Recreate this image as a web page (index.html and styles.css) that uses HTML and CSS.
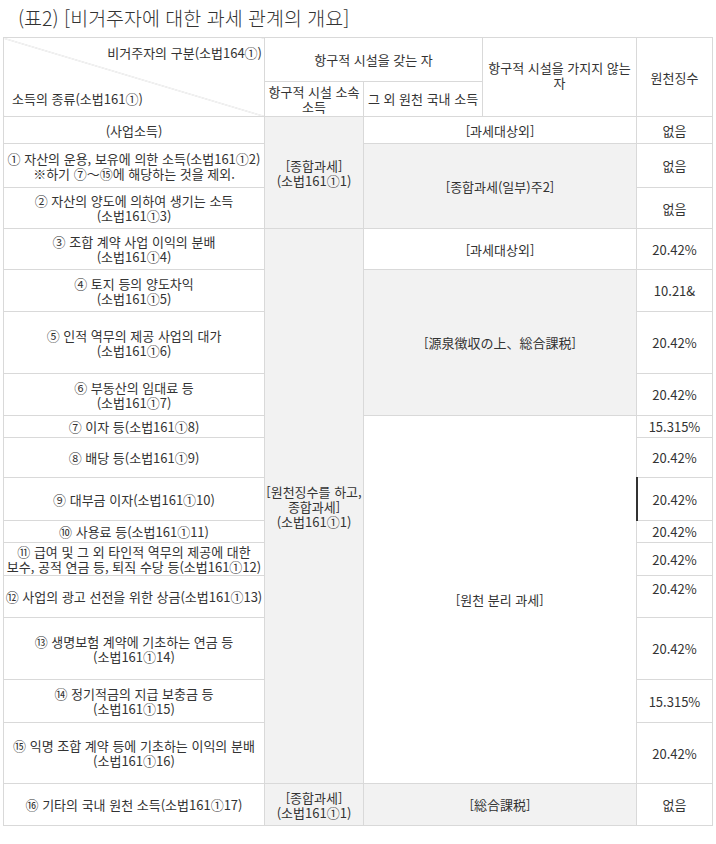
FILE: index.html
```html
<!DOCTYPE html>
<html lang="ko">
<head>
<meta charset="utf-8">
<link rel="stylesheet" href="styles.css">
</head>
<body>
<h1 class="title">(표2) [비거주자에 대한 과세 관계의 개요]</h1>
<table class="tax">
<colgroup>
<col class="c1"><col class="c2"><col class="c3"><col class="c4"><col class="c5">
</colgroup>
<tr class="h1">
<th rowspan="2" class="diag"><div class="diag-in"><span class="dtop">비거주자의 구분(소법164①)</span><span class="dbot">소득의 종류(소법161①)</span></div></th>
<th colspan="2">항구적 시설을 갖는 자</th>
<th rowspan="2" class="top">항구적 시설을 가지지 않는<br>자</th>
<th rowspan="2">원천징수</th>
</tr>
<tr class="h2">
<th>항구적 시설 소속<br>소득</th>
<th>그 외 원천 국내 소득</th>
</tr>
<tr class="r0">
<td>(사업소득)</td>
<td rowspan="3" class="g">[종합과세]<br>(소법161①1)</td>
<td colspan="2">[과세대상외]</td>
<td>없음</td>
</tr>
<tr class="r1">
<td>① 자산의 운용, 보유에 의한 소득(소법161①2)<br>※하기 ⑦～⑮에 해당하는 것을 제외.</td>
<td colspan="2" rowspan="2" class="g">[종합과세(일부)주2]</td>
<td>없음</td>
</tr>
<tr class="r2">
<td>② 자산의 양도에 의하여 생기는 소득<br>(소법161①3)</td>
<td>없음</td>
</tr>
<tr class="r3">
<td>③ 조합 계약 사업 이익의 분배<br>(소법161①4)</td>
<td rowspan="13" class="g">[원천징수를 하고,<br>종합과세]<br>(소법161①1)</td>
<td colspan="2">[과세대상외]</td>
<td>20.42%</td>
</tr>
<tr class="r4">
<td>④ 토지 등의 양도차익<br>(소법161①5)</td>
<td colspan="2" rowspan="3" class="g">[源泉徴収の上、総合課税]</td>
<td>10.21&amp;</td>
</tr>
<tr class="r5">
<td>⑤ 인적 역무의 제공 사업의 대가<br>(소법161①6)</td>
<td>20.42%</td>
</tr>
<tr class="r6">
<td>⑥ 부동산의 임대료 등<br>(소법161①7)</td>
<td>20.42%</td>
</tr>
<tr class="r7">
<td>⑦ 이자 등(소법161①8)</td>
<td colspan="2" rowspan="9">[원천 분리 과세]</td>
<td>15.315%</td>
</tr>
<tr class="r8">
<td>⑧ 배당 등(소법161①9)</td>
<td>20.42%</td>
</tr>
<tr class="r9">
<td>⑨ 대부금 이자(소법161①10)</td>
<td class="dark">20.42%</td>
</tr>
<tr class="r10">
<td>⑩ 사용료 등(소법161①11)</td>
<td>20.42%</td>
</tr>
<tr class="r11">
<td>⑪ 급여 및 그 외 타인적 역무의 제공에 대한<br>보수, 공적 연금 등, 퇴직 수당 등(소법161①12)</td>
<td>20.42%</td>
</tr>
<tr class="r12">
<td>⑫ 사업의 광고 선전을 위한 상금(소법161①13)</td>
<td class="top">20.42%</td>
</tr>
<tr class="r13">
<td>⑬ 생명보험 계약에 기초하는 연금 등<br>(소법161①14)</td>
<td>20.42%</td>
</tr>
<tr class="r14">
<td>⑭ 정기적금의 지급 보충금 등<br>(소법161①15)</td>
<td>15.315%</td>
</tr>
<tr class="r15">
<td>⑮ 익명 조합 계약 등에 기초하는 이익의 분배<br>(소법161①16)</td>
<td>20.42%</td>
</tr>
<tr class="r16">
<td>⑯ 기타의 국내 원천 소득(소법161①17)</td>
<td class="g">[종합과세]<br>(소법161①1)</td>
<td colspan="2" class="g">[総合課税]</td>
<td>없음</td>
</tr>
</table>
</body>
</html>
```

FILE: styles.css
```css
html, body {
  margin: 0;
  padding: 0;
  background: #fff;
}
body {
  font-family: "Noto Sans CJK KR", "Noto Sans", sans-serif;
  color: #333;
  padding: 0 5px 0 3px;
}
.title {
  font-size: 19.5px;
  font-weight: 300;
  line-height: 22px;
  margin: 7px 0 8px 15px;
  color: #333;
}
.tax {
  border-collapse: collapse;
  table-layout: fixed;
  width: 709px;
  font-size: 13px;
  line-height: 15px;
}
.c1 { width: 261px; }
.c2 { width: 99px; }
.c3 { width: 119px; }
.c4 { width: 154px; }
.c5 { width: 76px; }
.tax th, .tax td {
  border: 1px solid #d9d9d9;
  font-weight: 400;
  text-align: center;
  vertical-align: middle;
  padding: 0;
  white-space: nowrap;
}
.tax .g { background: #f2f2f2; }
.tax .top { vertical-align: top; padding-top: 5px; }
.tax th.top { padding-top: 22px; }
.tax .dark { border-left: 2px solid #333; }
.diag {
  padding: 0 !important;
  background: linear-gradient(to top right, transparent calc(50% - 0.6px), #d4d4d4 50%, transparent calc(50% + 0.6px));
}
.diag-in {
  display: flex;
  flex-direction: column;
  justify-content: space-between;
  height: 78px;
  padding: 7px 2px 10px 8px;
  box-sizing: border-box;
}
.dtop { text-align: right; }
.dbot { text-align: left; }
.h1 { height: 43px; }
.h2 { height: 35px; }
.r0 { height: 27px; }
.r1 { height: 44px; }
.r2 { height: 41px; }
.r3 { height: 41px; }
.r4 { height: 42px; }
.r5 { height: 62px; }
.r6 { height: 42px; }
.r7 { height: 22px; }
.r8 { height: 40px; }
.r9 { height: 43px; }
.r10 { height: 22px; }
.r11 { height: 33px; }
.r12 { height: 42px; }
.r13 { height: 62px; }
.r14 { height: 43px; }
.r15 { height: 61px; }
.r16 { height: 42px; }
```
